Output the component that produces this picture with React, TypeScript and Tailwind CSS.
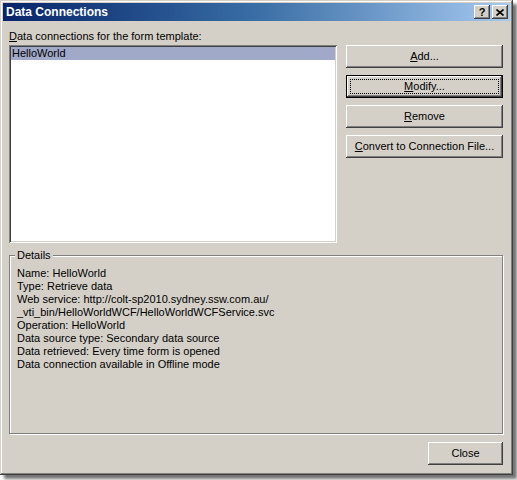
import React from "react";

const raised =
  "shadow-[inset_-1px_-1px_#404040,inset_1px_1px_#ffffff,inset_-2px_-2px_#808080,inset_2px_2px_#d4d0c8]";

const Btn = ({
  children,
  focused,
  className = "",
}: {
  children: React.ReactNode;
  focused?: boolean;
  className?: string;
}) => {
  if (focused) {
    return (
      <button className={`h-[23px] w-full border border-black bg-[#d4d0c8] p-0 ${className}`}>
        <div className={`h-full w-full p-[3px] ${raised}`}>
          <div className="flex h-full w-full items-center justify-center border border-dotted border-black text-[11px] leading-[13px] text-black">
            {children}
          </div>
        </div>
      </button>
    );
  }
  return (
    <button
      className={`flex h-[23px] w-full items-center justify-center bg-[#d4d0c8] text-[11px] leading-[13px] text-black ${raised} ${className}`}
    >
      {children}
    </button>
  );
};

const details = [
  "Name: HelloWorld",
  "Type: Retrieve data",
  "Web service: http://colt-sp2010.sydney.ssw.com.au/",
  "_vti_bin/HelloWorldWCF/HelloWorldWCFService.svc",
  "Operation: HelloWorld",
  "Data source type: Secondary data source",
  "Data retrieved: Every time form is opened",
  "Data connection available in Offline mode",
];

export default function App() {
  return (
    <div
      className="h-[480px] w-[517px] bg-white"
      style={{ fontFamily: '"Liberation Sans", Arial, sans-serif' }}
    >
      <div className="flex h-[475px] w-[513px] flex-col bg-[#d4d0c8] p-[3px] shadow-[inset_-1px_-1px_#404040,inset_1px_1px_#d4d0c8,inset_-2px_-2px_#808080,inset_2px_2px_#ffffff,4px_4px_3px_rgba(0,0,0,0.55)]">
        {/* title bar */}
        <div className="flex h-[18px] items-center bg-gradient-to-r from-[#0a246a] via-[#3a6ea5] to-[#a6caf0] pl-[3px] pr-[2px]">
          <span className="flex-1 text-[12px] font-bold leading-[14px] text-white">Data Connections</span>
          <div className="flex gap-[2px]">
            <div className={`flex h-[14px] w-[16px] items-center justify-center bg-[#d4d0c8] text-[11px] font-bold leading-none text-black ${raised}`}>
              ?
            </div>
            <div className={`flex h-[14px] w-[16px] items-center justify-center bg-[#d4d0c8] ${raised}`}>
              <svg width="8" height="7" viewBox="0 0 8 7">
                <path d="M0.5 0.5 L7.5 6.5 M7.5 0.5 L0.5 6.5" stroke="#000" strokeWidth="1.6" />
              </svg>
            </div>
          </div>
        </div>

        {/* body */}
        <div className="flex flex-1 flex-col pl-[6px] pr-[7px] text-[11px] leading-[13px] text-black">
          <div className="mt-[9px] flex gap-[9px]">
            <div className="w-[328px]">
              <div className="mb-[2px] h-[13px]">
                <span className="underline">D</span>ata connections for the form template:
              </div>
              <div className="h-[198px] bg-white p-[2px] shadow-[inset_1px_1px_#808080,inset_-1px_-1px_#ffffff,inset_2px_2px_#404040,inset_-2px_-2px_#d4d0c8]">
                <div className="h-[13px] bg-[#a0a9c7] pl-[1px]">HelloWorld</div>
              </div>
            </div>
            <div className="flex w-[157px] flex-col gap-[7px] pt-[15px]">
              <Btn>
                <span className="underline">A</span>dd...
              </Btn>
              <Btn focused>
                <span className="underline">M</span>odify...
              </Btn>
              <Btn>
                <span className="underline">R</span>emove
              </Btn>
              <Btn>
                <span className="underline">C</span>onvert to Connection File...
              </Btn>
            </div>
          </div>

          {/* details group */}
          <div className="relative mt-[12px] h-[179px] border border-[#808080] pl-[7px] pt-[11px] shadow-[inset_1px_1px_#ffffff,1px_1px_#ffffff]">
            <span className="absolute -top-[7px] left-[5px] bg-[#d4d0c8] px-[2px]">Details</span>
            {details.map((d) => (
              <div key={d} className="h-[13px] whitespace-nowrap">
                {d}
              </div>
            ))}
          </div>

          <div className="mt-[8px] flex justify-end">
            <Btn className="!w-[75px]">Close</Btn>
          </div>
        </div>
      </div>
    </div>
  );
}
